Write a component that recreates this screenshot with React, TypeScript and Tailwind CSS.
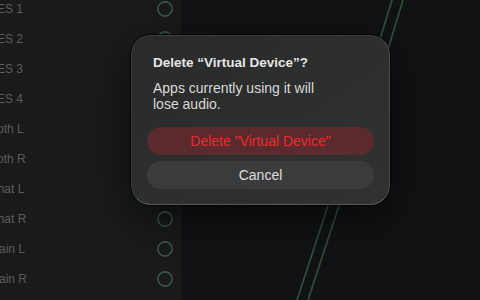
const rows = ["AES 1", "AES 2", "AES 3", "AES 4", "Both L", "Both R", "Chat L", "Chat R", "Main L", "Main R"]

function ChannelRow({ label }: { label: string }) {
	return (
		<div className="flex h-[30px] shrink-0 items-center">
			<span className="ml-[-11px] text-[12px] text-[#5c5c5c] whitespace-nowrap">{label}</span>
			<svg className="ml-auto mr-[8px]" width="16" height="16" viewBox="0 0 16 16">
				<circle cx="8" cy="8" r="7.1" stroke="#3a5645" strokeWidth="1.6" fill="none" />
			</svg>
		</div>
	)
}

export default function App() {
	return (
		<div className="relative flex h-[300px] w-[480px] overflow-hidden bg-[#111214] font-['Liberation_Sans',Arial,sans-serif]">
			{/* channel list */}
			<div className="flex w-[181px] shrink-0 flex-col overflow-hidden bg-[#1a1a1a]">
				<div className="mt-[-6px] flex flex-col">
					{rows.map((r) => (
						<ChannelRow key={r} label={r} />
					))}
				</div>
			</div>
			<div className="flex-1 bg-[#111214]" />

			{/* patch cables */}
			<svg className="pointer-events-none absolute inset-0" width="480" height="300" viewBox="0 0 480 300">
				<path d="M392 0 Q 347 150 297 300" stroke="#2f4b3b" strokeWidth="1.8" fill="none" />
				<path d="M403 0 Q 358 150 308 300" stroke="#2f4b3b" strokeWidth="1.8" fill="none" />
			</svg>

			{/* alert */}
			<div className="absolute left-[131px] top-[35px] flex h-[170px] w-[259px] flex-col rounded-[20px] border border-[#3c3d3d] border-b-[#585a5a] border-r-[#4a4c4c] bg-gradient-to-br from-[#2a2a2a] to-[#303232] px-[15px] pb-[15px] pt-[19px] shadow-[0_0_0_1px_rgba(0,0,0,0.75),0_14px_40px_rgba(0,0,0,0.55)]">
				<h3 className="px-[6px] text-[13.5px] font-bold leading-[16px] text-[#e6e6e6]">Delete “Virtual Device”?</h3>
				<p className="mt-[9px] max-w-[180px] px-[6px] text-[14px] leading-[16px] text-[#dadada]">
					Apps currently using it will lose audio.
				</p>
				<div className="mt-auto flex flex-col gap-[6px]">
					<button type="button" className="flex h-[28px] items-center justify-center rounded-full bg-[#5a2a2d] text-[14px] text-[#ec2a30]">
						Delete "Virtual Device"
					</button>
					<button type="button" className="flex h-[28px] items-center justify-center rounded-full bg-[#3a3b3b] text-[14px] text-[#dedede]">
						Cancel
					</button>
				</div>
			</div>
		</div>
	)
}
